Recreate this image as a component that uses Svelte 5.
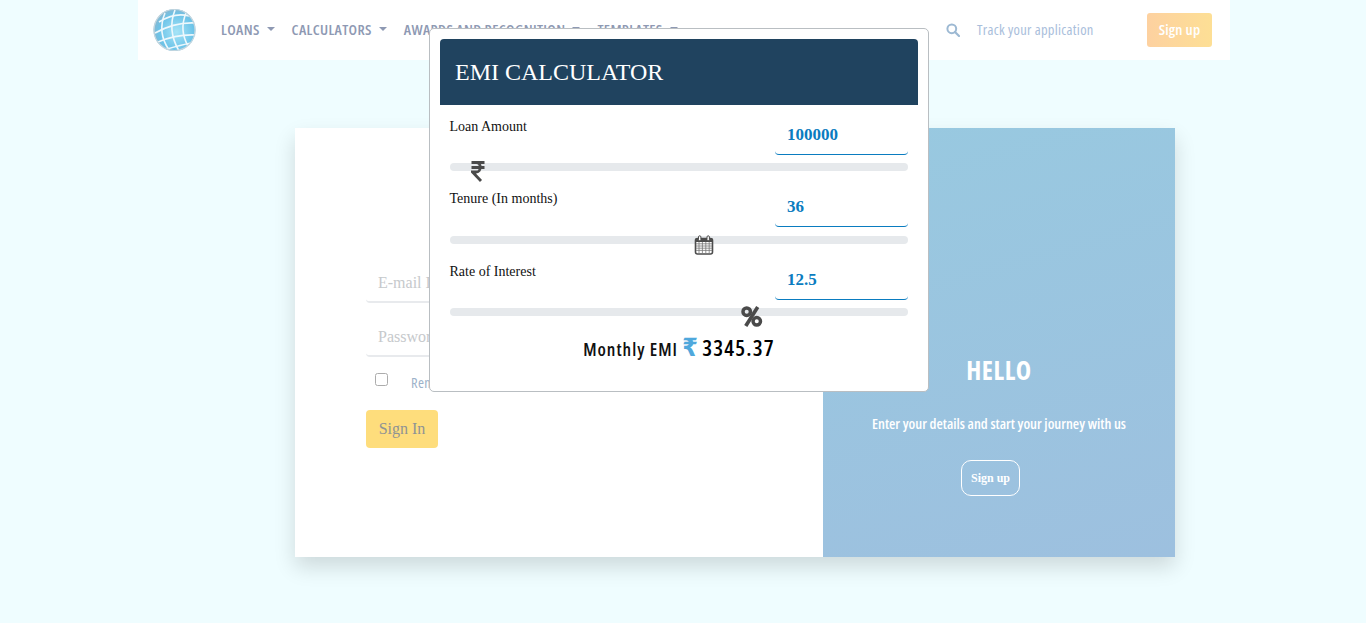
<script>
    const navItems = ["LOANS", "CALCULATORS", "AWARDS AND RECOGNITION", "TEMPLATES"];

    const sliders = [
        { label: "Loan Amount", value: "100000", icon: "rupee", left: 21 },
        { label: "Tenure (In months)", value: "36", icon: "calendar", left: 244 },
        { label: "Rate of Interest", value: "12.5", icon: "percent", left: 290 },
    ];

    const gridLines = [4, 8, 12, 16];
</script>

<div class="page">
    <nav class="nav">
        <svg class="logo" viewBox="0 0 44 44" width="44" height="44">
            <defs>
                <radialGradient id="globe" cx="0.55" cy="0.55" r="0.6">
                    <stop offset="0" stop-color="#a6e4f7" />
                    <stop offset="0.7" stop-color="#6cc3e8" />
                    <stop offset="1" stop-color="#8fb6cc" />
                </radialGradient>
            </defs>
            <circle cx="21.5" cy="22" r="21" fill="url(#globe)" />
            <g fill="none" stroke="#eef8fc" stroke-width="1.6">
                <path d="M6 14 Q22 4 36 8" />
                <path d="M2 25 Q22 14 42 15" />
                <path d="M5 34 Q24 26 43 27" />
                <path d="M14 41 Q28 37 38 35" />
                <path d="M12 5 Q4 24 16 42" />
                <path d="M22 2 Q14 22 26 43" />
                <path d="M33 5 Q26 22 35 38" />
            </g>
            <circle cx="21.5" cy="22" r="20.5" fill="none" stroke="#c4d6df" stroke-width="1.2" />
        </svg>
        <ul class="menu">
            {#each navItems as item}
                <li>{item}<span class="caret"></span></li>
            {/each}
        </ul>
        <div class="nav-right">
            <svg class="search" viewBox="0 0 14 14" width="14" height="14">
                <circle cx="5.8" cy="5.8" r="4.4" fill="none" stroke="#9db9d3" stroke-width="2" />
                <path d="M9 9l4 4" stroke="#9db9d3" stroke-width="2.2" stroke-linecap="round" />
            </svg>
            <span class="track">Track your application</span>
            <button class="signup-top">Sign up</button>
        </div>
    </nav>

    <main class="card">
        <section class="left">
            <input class="field" placeholder="E-mail ID" />
            <input class="field" placeholder="Password" />
            <label class="remember">
                <input type="checkbox" />
                <span>Remember me</span>
            </label>
            <button class="signin">Sign In</button>
        </section>
        <section class="right">
            <h2>HELLO</h2>
            <p>Enter your details and start your journey with us</p>
            <button class="ghost">Sign up</button>
        </section>
    </main>

    <div class="modal">
        <header class="modal-head">EMI CALCULATOR</header>
        <div class="modal-body">
            {#each sliders as s}
                <div class="row">
                    <span class="row-label">{s.label}</span>
                    <input class="row-input" value={s.value} />
                </div>
                <div class="track-bar">
                    <span class="thumb {s.icon}" style="left: {s.left}px">
                        {#if s.icon === "rupee"}
                            <svg viewBox="0 0 14 21" width="14" height="21">
                                <path d="M0.5 1.5H13.5M0.5 6.5H13.5M1 1.5H5.5C10.5 1.5 10.5 11 5.5 11H1.5L10 20" fill="none" stroke="#4a4a4a" stroke-width="2.8" />
                            </svg>
                        {:else if s.icon === "calendar"}
                            <svg viewBox="0 0 20 20" width="20" height="20">
                                <rect x="1.5" y="3.5" width="17" height="15.5" rx="2" fill="#fff" stroke="#4d4d4d" stroke-width="1.6" />
                                <rect x="1.5" y="3.5" width="17" height="3.5" fill="#4d4d4d" />
                                {#each gridLines as g}
                                    <path d="M{g * 0.85 + 1.6} 7V18M2 {g * 0.55 + 6.6}H18" stroke="#777" stroke-width="0.8" />
                                {/each}
                                <rect x="4.5" y="0.8" width="2.4" height="5" rx="1.2" fill="#fff" stroke="#4d4d4d" />
                                <rect x="13" y="0.8" width="2.4" height="5" rx="1.2" fill="#fff" stroke="#4d4d4d" />
                            </svg>
                        {:else}
                            <svg viewBox="0 0 24 24" width="23" height="23">
                                <circle cx="7" cy="7" r="3.9" fill="none" stroke="#4a4a4a" stroke-width="3.6" />
                                <circle cx="17.5" cy="17" r="3.9" fill="none" stroke="#4a4a4a" stroke-width="3.6" />
                                <path d="M18.5 2L6 22" stroke="#4a4a4a" stroke-width="3.8" />
                            </svg>
                        {/if}
                    </span>
                </div>
            {/each}
            <div class="emi">
                Monthly EMI <span class="rupee">₹</span> <strong>3345.37</strong>
            </div>
        </div>
    </div>
</div>

<style>
    :global(body) {
        background: #effdff;
        font-family: "Liberation Serif", serif;
    }
    * {
        box-sizing: border-box;
    }
    .page {
        height: 623px;
        overflow: hidden;
        display: flex;
        flex-direction: column;
        align-items: flex-start;
    }
    .nav {
        width: 1092px;
        height: 60px;
        margin-left: 138px;
        flex: none;
        background: #fff;
        display: flex;
        align-items: center;
        padding: 0 18px 0 15px;
        font-family: "Open Sans", sans-serif;
        font-stretch: 75%;
    }
    .logo {
        flex: none;
        margin-top: -1px;
    }
    .menu {
        display: flex;
        gap: 17px;
        list-style: none;
        margin: -2px 0 0 24px;
        padding: 0;
        color: #8e99b3;
        font-size: 15px;
        font-weight: 600;
        letter-spacing: 0.35px;
    }
    .menu li {
        display: flex;
        align-items: center;
        white-space: nowrap;
    }
    .caret {
        width: 0;
        height: 0;
        margin-left: 7px;
        border: 4px solid transparent;
        border-top-color: #8e99b3;
        border-bottom: 0;
    }
    .nav-right {
        margin-left: auto;
        display: flex;
        align-items: center;
    }
    .track {
        margin: -2px 0 0 17px;
        color: #a9bedb;
        font-size: 14.5px;
        letter-spacing: 0.3px;
        width: 170px;
    }
    .signup-top {
        width: 65px;
        height: 34px;
        border: 0;
        border-radius: 3px;
        background: linear-gradient(90deg, #fdd1a0, #fddf95);
        color: #fff;
        font-family: inherit;
        font-stretch: inherit;
        font-size: 15px;
        font-weight: 600;
        letter-spacing: 0.2px;
        padding: 0 0 2px;
    }
    .card {
        width: 880px;
        height: 429px;
        margin: 68px 0 0 295px;
        flex: none;
        display: flex;
        box-shadow: 0 10px 20px rgba(0, 0, 0, 0.14);
    }
    .left {
        width: 528px;
        background: #fff;
        padding: 136px 70px 0 71px;
        display: flex;
        flex-direction: column;
        align-items: flex-start;
    }
    .field {
        width: 100%;
        height: 39px;
        margin-bottom: 15px;
        border: 0;
        border-bottom: 2px solid #e8eaed;
        border-radius: 4px;
        padding: 0 12px;
        font-family: inherit;
        font-size: 16px;
        outline: none;
    }
    .field::placeholder {
        color: #c6c9cc;
        opacity: 1;
    }
    .remember {
        display: flex;
        align-items: center;
        margin: -5px 0 0 9px;
        height: 30px;
        font-family: "Open Sans", sans-serif;
        font-stretch: 75%;
        font-size: 14.5px;
        letter-spacing: 0.3px;
        color: #9db2c9;
    }
    .remember input {
        width: 13px;
        height: 13px;
        margin: 0 23px 5px 0;
        opacity: 0.6;
    }
    .signin {
        margin-top: 13px;
        width: 72px;
        height: 38px;
        border: 0;
        border-radius: 4px;
        background: #fedd7c;
        color: #8f9394;
        font-family: inherit;
        font-size: 16px;
    }
    .right {
        flex: 1;
        background: linear-gradient(165deg, #98c9e0, #9dc0df);
        display: flex;
        flex-direction: column;
        align-items: center;
        padding-top: 228px;
        color: #fff;
    }
    .right h2 {
        margin: 0;
        font-family: "Open Sans", sans-serif;
        font-stretch: 75%;
        font-size: 26px;
        line-height: 29px;
        letter-spacing: 0.6px;
        font-weight: 700;
    }
    .right p {
        margin: 30px 0 0;
        font-family: "Open Sans", sans-serif;
        font-stretch: 75%;
        font-size: 14.5px;
        line-height: 18px;
        font-weight: 600;
    }
    .ghost {
        margin: 27px 17px 0 0;
        width: 59px;
        height: 36px;
        border: 1px solid #fff;
        border-radius: 10px;
        background: transparent;
        color: #fff;
        font-family: inherit;
        font-size: 12px;
        font-weight: 700;
        padding: 0;
    }
    .modal {
        position: absolute;
        left: 429px;
        top: 28px;
        width: 500px;
        height: 364px;
        background: #fff;
        border: 1px solid #b9bec2;
        border-radius: 5px;
        padding: 10px;
    }
    .modal-head {
        height: 66px;
        background: #20435f;
        border-radius: 4px 4px 0 0;
        color: #fff;
        font-size: 24px;
        line-height: 66px;
        padding-left: 15px;
    }
    .modal-body {
        padding: 0 10px;
    }
    .row {
        display: flex;
        justify-content: space-between;
        height: 58px;
    }
    .row-label {
        margin-top: 13.6px;
        margin-left: -0.5px;
        font-size: 14px;
        line-height: 16px;
        color: #111;
    }
    .row-input {
        width: 133px;
        height: 39.8px;
        margin-top: 10px;
        border: 0;
        border-bottom: 1px solid #0a7cc0;
        border-radius: 4px;
        padding: 0.6px 12px 0;
        color: #0a7cc0;
        font-family: inherit;
        font-size: 17px;
        font-weight: 700;
        outline: none;
    }
    .track-bar {
        position: relative;
        height: 8px;
        margin-bottom: 6.5px;
        background: #e6e9ec;
        border-radius: 4px;
    }
    .thumb {
        position: absolute;
        top: -2px;
        line-height: 0;
    }
    .thumb.calendar {
        top: -1px;
    }
    .thumb.percent {
        top: -3px;
    }
    .emi {
        margin-top: 17px;
        height: 28px;
        line-height: 28px;
        text-align: center;
        font-family: "Open Sans", sans-serif;
        font-stretch: 75%;
        font-size: 18px;
        font-weight: 600;
        letter-spacing: 1px;
        color: #111;
    }
    .rupee {
        color: #4fa8dc;
        font-family: "DejaVu Sans", sans-serif;
        font-size: 25px;
        line-height: 0;
        letter-spacing: 0;
    }
    .emi strong {
        font-size: 22px;
        font-weight: 600;
        letter-spacing: 1.2px;
        color: #000;
    }
</style>
